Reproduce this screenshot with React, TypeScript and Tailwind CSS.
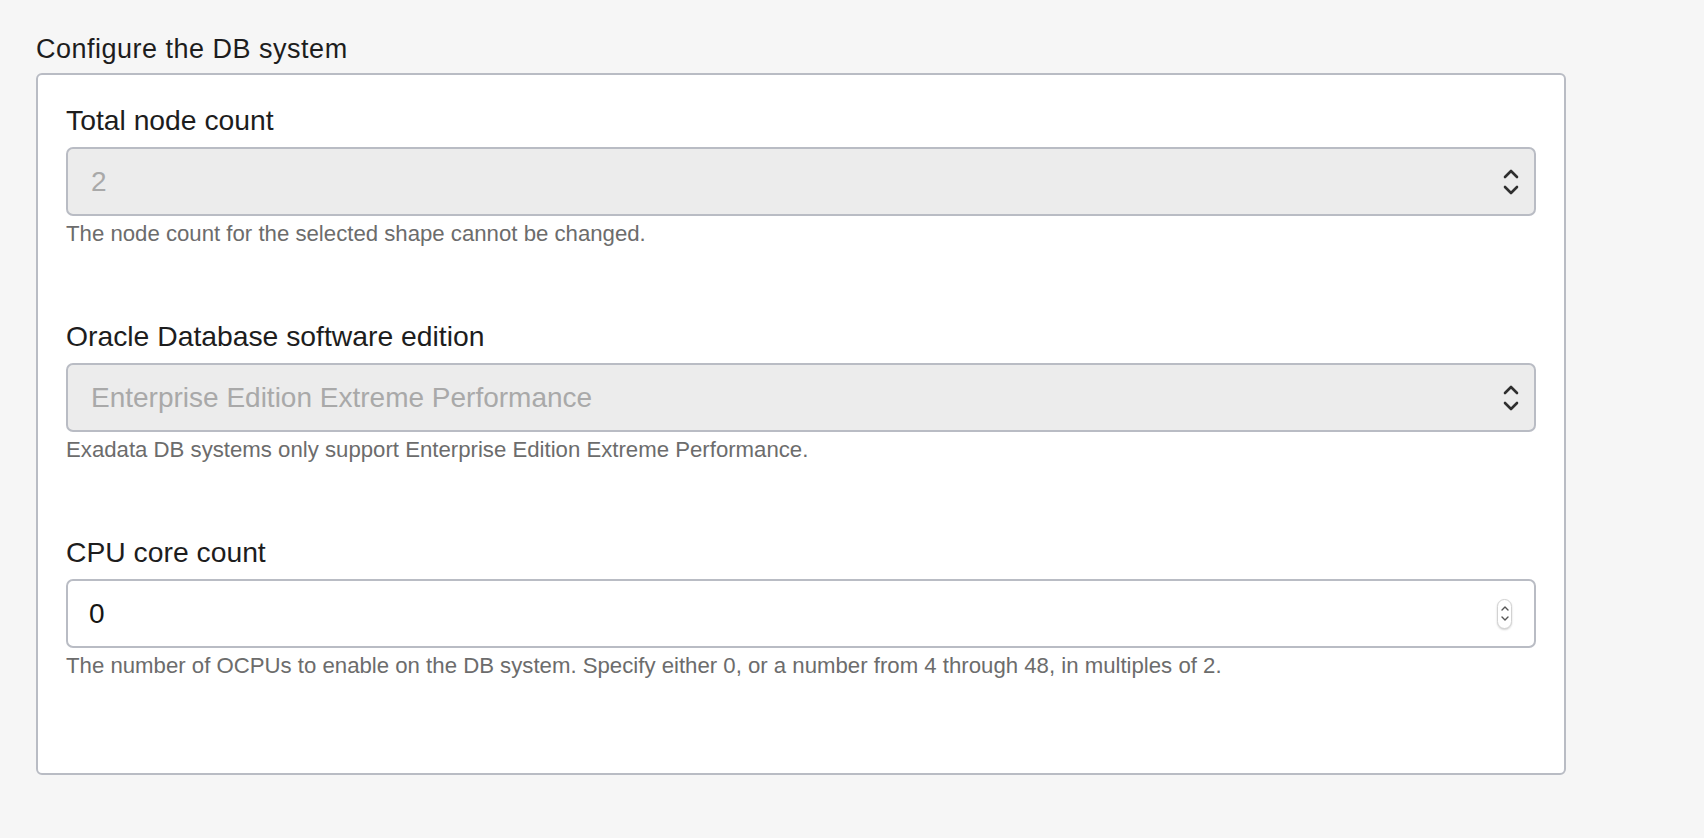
import React from 'react'

const font = { fontFamily: '"Liberation Sans", Arial, sans-serif' }

// select 右侧的上下箭头
const SelectChevrons = () => (
  <svg width="16" height="30" viewBox="0 0 16 30" fill="none" stroke="#2f2f2f" strokeWidth="2.6" strokeLinecap="round" strokeLinejoin="round">
    <polyline points="2,10 8,4 14,10" />
    <polyline points="2,20 8,26 14,20" />
  </svg>
)

// number 输入框的小型步进器
const NumberSpinner = () => (
  <div className="flex h-[30px] w-[15px] flex-col items-center justify-center gap-[5px] rounded-full border border-[#d2d2d2] bg-white shadow-[0_1px_2px_rgba(0,0,0,0.18)]">
    <svg width="8" height="5" viewBox="0 0 8 5" fill="none" stroke="#555" strokeWidth="1.4" strokeLinecap="round" strokeLinejoin="round">
      <polyline points="1,4 4,1 7,4" />
    </svg>
    <svg width="8" height="5" viewBox="0 0 8 5" fill="none" stroke="#555" strokeWidth="1.4" strokeLinecap="round" strokeLinejoin="round">
      <polyline points="1,1 4,4 7,1" />
    </svg>
  </div>
)

interface FieldProps {
  label: string
  help: string
  children: React.ReactNode
  last?: boolean
}

const Field: React.FC<FieldProps> = ({ label, help, children, last }) => (
  <div className={last ? '' : 'mb-[71px]'}>
    <label className="block text-[28.3px] leading-[34px] text-[#1d1d1d]">{label}</label>
    <div className="relative mt-[10px]">{children}</div>
    <p className="mt-[4px] text-[22.2px] leading-[28px] text-[#6c6c6c]">{help}</p>
  </div>
)

const selectClass =
  'block h-[69px] w-full appearance-none rounded-[7px] border-2 border-[#b9bcc4] bg-[#ececec] pl-[23px] pr-[50px] text-[28px] text-[#a9a9a9] outline-none'

export default function App() {
  return (
    <div className="min-h-screen bg-[#f6f6f6] px-[36px] pt-[33px]" style={font}>
      <h2 className="text-[27px] leading-[32px] font-normal tracking-[0.5px] text-[#1d1d1d]">Configure the DB system</h2>

      <div className="mt-[8px] w-[1530px] rounded-[6px] border-2 border-[#b9bcc4] bg-white px-[28px] pt-[28px] pb-[93px]">
        <Field label="Total node count" help="The node count for the selected shape cannot be changed.">
          <select disabled className={selectClass} style={font} defaultValue="2">
            <option value="2">2</option>
          </select>
          <div className="pointer-events-none absolute top-1/2 right-[17px] -translate-y-1/2">
            <SelectChevrons />
          </div>
        </Field>

        <Field
          label="Oracle Database software edition"
          help="Exadata DB systems only support Enterprise Edition Extreme Performance."
        >
          <select disabled className={selectClass} style={font} defaultValue="ee-xp">
            <option value="ee-xp">Enterprise Edition Extreme Performance</option>
          </select>
          <div className="pointer-events-none absolute top-1/2 right-[17px] -translate-y-1/2">
            <SelectChevrons />
          </div>
        </Field>

        <Field
          last
          label="CPU core count"
          help="The number of OCPUs to enable on the DB system. Specify either 0, or a number from 4 through 48, in multiples of 2."
        >
          <input
            type="number"
            defaultValue={0}
            className="block h-[69px] w-full appearance-none rounded-[7px] border-2 border-[#b9bcc4] bg-white pl-[21px] pr-[50px] text-[28px] text-[#161513] outline-none [appearance:textfield] [&::-webkit-inner-spin-button]:appearance-none [&::-webkit-outer-spin-button]:appearance-none"
            style={font}
          />
          <div className="pointer-events-none absolute top-1/2 right-[24px] -translate-y-1/2">
            <NumberSpinner />
          </div>
        </Field>
      </div>
    </div>
  )
}
